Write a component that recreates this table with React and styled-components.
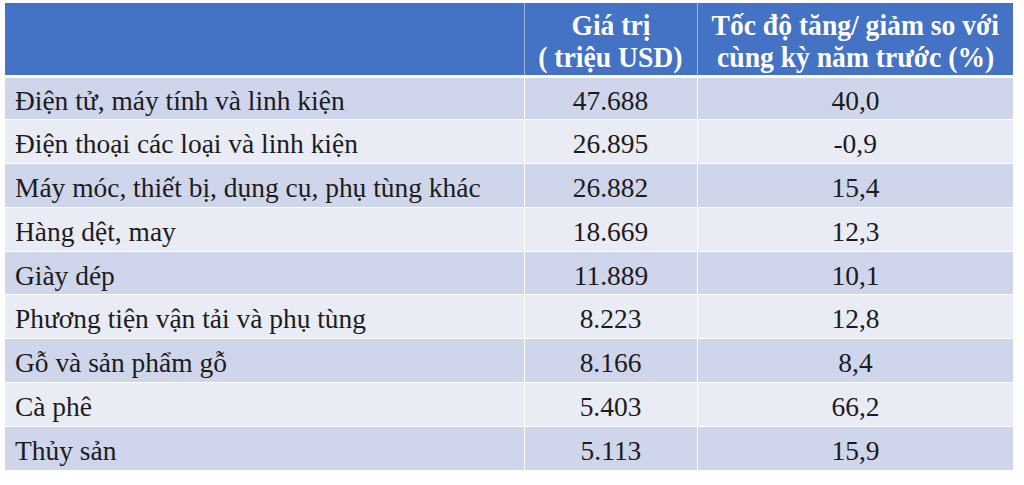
import styled, { createGlobalStyle } from "styled-components";

const GlobalStyle = createGlobalStyle`
  html, body {
    margin: 0;
    padding: 0;
    background: #ffffff;
  }
`;

const Page = styled.div`
  width: 1024px;
  height: 485px;
  padding: 3px 0 0 5px;
  box-sizing: border-box;
  overflow: hidden;
  font-family: "Liberation Serif", serif;
`;

const Table = styled.table`
  width: 1008px;
  border-collapse: collapse;
  table-layout: fixed;
  font-family: inherit;
  color: #1c1c1c;
`;

const HeadRow = styled.tr`
  height: 73px;
  background: #4472c4;
`;

const HeadCell = styled.th`
  padding: 0 0 2px;
  color: #ffffff;
  font-family: inherit;
  font-size: 30px;
  font-weight: bold;
  line-height: 32px;
  vertical-align: bottom;
  border-left: 1px solid #9db3e0;
  border-bottom: 3px solid #ffffff;
  &:first-child {
    border-left: none;
  }
`;

const HeadText = styled.div`
  display: flex;
  flex-direction: column;
  align-items: center;
`;

const HeadLine = styled.span`
  display: inline-block;
  white-space: nowrap;
  transform: scaleX(0.92);
  transform-origin: center;
`;

const Row = styled.tr`
  height: 43.8px;
  background: ${(p) => (p.$shade ? "#cfd5ea" : "#e9ebf5")};
`;

const Cell = styled.td`
  padding: 4px ${(p) => (p.$align === "left" ? "10px" : "0")} 0;
  font-family: inherit;
  font-size: 28px;
  line-height: 31px;
  text-align: ${(p) => p.$align || "center"};
  vertical-align: middle;
  border-top: 1px solid #ffffff;
  border-left: 1.5px solid #ffffff;
  white-space: nowrap;
  &:first-child {
    border-left: none;
  }
`;

const CellText = styled.span`
  display: inline-block;
  transform: scaleX(0.98);
  transform-origin: ${(p) => (p.$align === "left" ? "left" : "center")};
`;

const rows = [
  ["Điện tử, máy tính và linh kiện", "47.688", "40,0"],
  ["Điện thoại các loại và linh kiện", "26.895", "-0,9"],
  ["Máy móc, thiết bị, dụng cụ, phụ tùng khác", "26.882", "15,4"],
  ["Hàng dệt, may", "18.669", "12,3"],
  ["Giày dép", "11.889", "10,1"],
  ["Phương tiện vận tải và phụ tùng", "8.223", "12,8"],
  ["Gỗ và sản phẩm gỗ", "8.166", "8,4"],
  ["Cà phê", "5.403", "66,2"],
  ["Thủy sản", "5.113", "15,9"],
];

export default function App() {
  return (
    <Page>
      <GlobalStyle />
      <Table>
        <colgroup>
          <col style={{ width: "519px" }} />
          <col style={{ width: "173px" }} />
          <col style={{ width: "316px" }} />
        </colgroup>
        <thead>
          <HeadRow>
            <HeadCell />
            <HeadCell>
              <HeadText>
                <HeadLine>Giá trị</HeadLine>
                <HeadLine>( triệu USD)</HeadLine>
              </HeadText>
            </HeadCell>
            <HeadCell>
              <HeadText>
                <HeadLine>Tốc độ tăng/ giảm so với</HeadLine>
                <HeadLine>cùng kỳ năm trước (%)</HeadLine>
              </HeadText>
            </HeadCell>
          </HeadRow>
        </thead>
        <tbody>
          {rows.map((r, i) => (
            <Row key={r[0]} $shade={i % 2 === 0}>
              <Cell $align="left">
                <CellText $align="left">{r[0]}</CellText>
              </Cell>
              <Cell>
                <CellText>{r[1]}</CellText>
              </Cell>
              <Cell>
                <CellText>{r[2]}</CellText>
              </Cell>
            </Row>
          ))}
        </tbody>
      </Table>
    </Page>
  );
}
